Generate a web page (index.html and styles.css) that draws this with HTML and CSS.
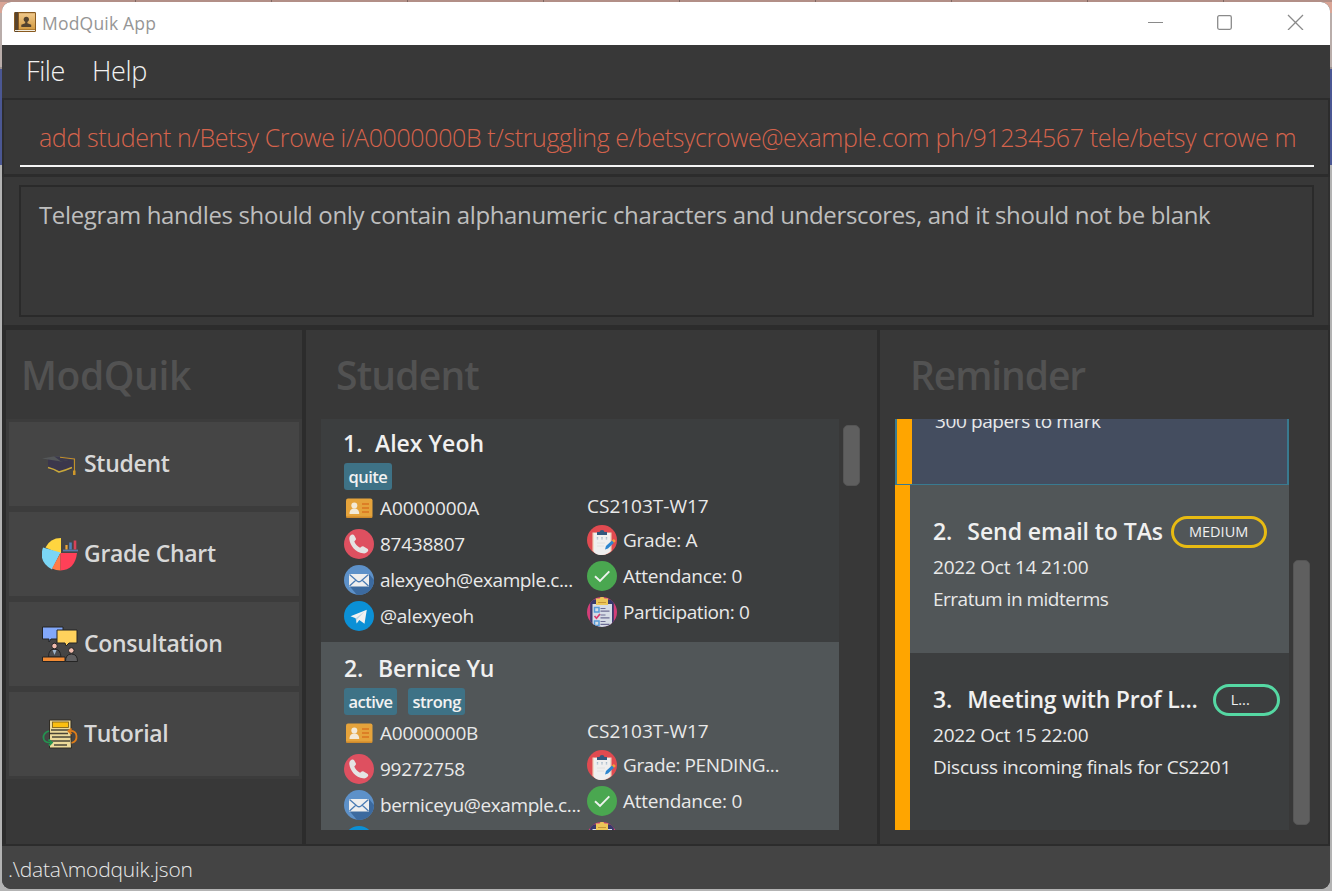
FILE: index.html
```html
<!DOCTYPE html>
<html lang="en">
<head>
<meta charset="utf-8">
<title>ModQuik App</title>
<link rel="stylesheet" href="styles.css">
</head>
<body>
<svg width="0" height="0" class="defs">
  <symbol id="i-id" viewBox="0 0 30 30">
    <rect x="2" y="5.500" width="26.500" height="19.500" rx="2" fill="#e5a33b"/>
    <path d="M2 23.500h26.500v0a1.500 1.500 0 0 1-1.500 1.500H3.500A1.500 1.500 0 0 1 2 23.500z" fill="#cf8a2c"/>
    <circle cx="10.300" cy="12.500" r="3" fill="#f3ead8"/>
    <path d="M5.500 21c0-4 2-5.500 4.800-5.500s4.900 1.500 4.900 5.500z" fill="#f3ead8"/>
    <path d="M18 11h7M18 15h7M18 19h7" stroke="#dc7f26" stroke-width="2"/>
  </symbol>
  <symbol id="i-phone" viewBox="0 0 30 30">
    <circle cx="15" cy="15" r="15" fill="#de5060"/>
    <path d="M7.500 5.800c1-.6 2.300-.2 2.800.8l1.500 2.700c.4.900.1 1.700-.6 2.300l-.9.900c.8 2.500 3 4.900 5.800 6.200l1.200-1c.7-.6 1.500-.7 2.300-.2l3.800 2.200c.9.600 1.100 1.700.5 2.600-1 1.500-2.900 2.400-5 2C11.800 23.400 6 17 5.300 10c-.1-1.800.5-3.300 2.200-4.200z" fill="#e4e4e4"/>
  </symbol>
  <symbol id="i-mail" viewBox="0 0 30 30">
    <circle cx="15" cy="15" r="15" fill="#5d91c9"/>
    <path d="M5 20.500L13 29.900Q18 30.500 23 27.700Q30 23 30 15L25 9z" fill="#3c6a9f"/>
    <rect x="5" y="9" width="20" height="12.500" fill="#eeeeee"/>
    <path d="M5.500 9.500L13 16q2 1.500 4 0l7.500-6.500M5.500 21l6.500-6M24.500 21L18 15" fill="none" stroke="#4b7cb4" stroke-width="1.300"/>
  </symbol>
  <symbol id="i-telegram" viewBox="0 0 30 30">
    <circle cx="15" cy="15" r="15" fill="#0b90d6"/>
    <path d="M6.500 15.300L22.800 8.800 20.500 22.700 15.300 19 12.700 22.500 11.700 17.200z" fill="#f1f1f1"/>
    <path d="M11.700 17.200L20.500 10.500 13.300 18.300 12.700 22.500z" fill="#bdd5e4"/>
  </symbol>
  <symbol id="i-grade" viewBox="0 0 30 30">
    <circle cx="15" cy="15" r="15" fill="#e04a50"/>
    <path d="M5.500 7.500h19v18.400Q20 30 15 30T5.500 26z" fill="#efd9c5"/>
    <path d="M7 8h16v18.500Q19 30 14 30T7 27z" fill="#efefef"/>
    <path d="M10 10V7h2.500q.3-2 2.500-2t2.500 2H20v3z" fill="#31577d"/>
    <path d="M10.500 12v3M15 12v3M19.500 12v3" stroke="#a9bccb" stroke-width="1.400" stroke-dasharray="1.800 .6"/>
    <path d="M10 18h8M10 21h7" stroke="#dddddd" stroke-width=".8"/>
    <path d="M18 24.500l1-3.500 6-5.500 2 2.200-6 5.700z" fill="#2c86cf"/>
    <path d="M25 15.500l1.800-1.600 2 2.200L27 17.700z" fill="#eea33c"/>
  </symbol>
  <symbol id="i-check" viewBox="0 0 30 30">
    <circle cx="15" cy="15" r="15" fill="#4aa750"/>
    <path d="M8 15.200l5 4.800 9.300-9.600" fill="none" stroke="#eef2ee" stroke-width="1.900"/>
  </symbol>
  <symbol id="i-part" viewBox="0 0 30 30">
    <clipPath id="pc"><circle cx="15" cy="15" r="15"/></clipPath>
    <g clip-path="url(#pc)">
      <rect width="30" height="30" fill="#d33e78"/>
      <rect x="3.200" y="2.500" width="23.600" height="29" rx="2" fill="#393a6c"/>
      <rect x="5.500" y="7" width="19.500" height="23" fill="#d6dce6"/>
      <path d="M9 1.500h3.500L13.500 0h3l1 1.500H21V8H9z" fill="#ecc657"/>
      <path d="M11 5.500h8" stroke="#c69537" stroke-width="1"/>
      <rect x="7.500" y="10.500" width="4.500" height="4.500" fill="none" stroke="#579bd8" stroke-width="1.500"/>
      <path d="M7.500 19l2 2.300 3.500-4.300" fill="none" stroke="#da3b70" stroke-width="1.700"/>
      <rect x="7.500" y="24" width="4.500" height="4.500" fill="none" stroke="#579bd8" stroke-width="1.500"/>
      <path d="M13.500 11.500h5M13.500 14.200h9M13.500 18h5M13.500 20.800h9M13.500 24.500h5M13.500 27.300h9" stroke="#6c6c94" stroke-width="1.200"/>
    </g>
  </symbol>
</svg>
<div class="window">
  <header class="titlebar">
    <svg class="app-icon" viewBox="0 0 22 20">
      <defs><linearGradient id="book" x2="0" y2="1"><stop offset="0" stop-color="#f0c88a"/><stop offset="1" stop-color="#d39b42"/></linearGradient></defs>
      <rect width="22" height="20" rx="1.200" fill="#8a5b20"/>
      <path d="M1 0h3v20H1z" fill="#59442c"/>
      <rect x="5" y="1.200" width="16" height="16.300" fill="url(#book)"/>
      <path d="M1 18.500h20" stroke="#f2eee2"/>
      <circle cx="12.300" cy="7.300" r="2.600" fill="#54432f"/>
      <path d="M11.200 9h2.200v2.200l3.800 1.500V15H7.300v-2.300l3.900-1.500z" fill="#54432f"/>
    </svg>
    <span class="app-title">ModQuik App</span>
    <svg class="controls" viewBox="0 0 156 16">
      <g fill="none" stroke="#8a8a8a" stroke-width="1.300">
        <path d="M0 8.500h15" stroke-width="1"/><rect x="69.700" y="1.700" width="13.600" height="13.600" rx="1.500"/><path d="M140 1l15 15M155 1l-15 15"/>
      </g>
    </svg>
  </header>
  <nav class="menu"><span>File</span><span>Help</span></nav>
  <section class="command"><div class="command-input">add student n/Betsy Crowe i/A0000000B t/struggling e/betsycrowe@example.com ph/91234567 tele/betsy crowe m</div></section>
  <section class="result"><div class="result-box">Telegram handles should only contain alphanumeric characters and underscores, and it should not be blank</div></section>
  <main class="panels">
    <aside class="panel side">
      <h1>ModQuik</h1>
      <div class="tabs">
        <div class="tab">
          <svg viewBox="0 0 36 36"><path d="M6 12l12 3.500 13-3v10.500Q18 28 6 23z" fill="#3b374c"/><path d="M0 12.500L14 10 36 12 19 15.500z" fill="#545759"/><path d="M12 10.300L36 12l-17 3.500z" fill="#3b394c"/><path d="M6 21.500q6 1.500 11 4.500 6-1.500 13-4.500" fill="none" stroke="#c8a83a" stroke-width="1.600"/><path d="M18 11.300l14.500 1.700V28" fill="none" stroke="#c2902b" stroke-width="1.100"/><path d="M31 24.500h2.500V29H31z" fill="#cf982b"/></svg>
          <span>Student</span></div>
        <div class="tab">
          <svg viewBox="0 0 36 36"><path d="M18 18L3.500 11.500Q8 2 19 2v15z" fill="#ffd53f"/><path d="M18.500 16.500L1 11.500Q-4 26 10 33.500z" fill="#7bd6f5"/><path d="M18.500 17L10 32.500q4 2 8.500 2z" fill="#ff7b47"/><path d="M18.500 17H35Q33 34 18.500 34.500z" fill="#ff4058"/><path d="M21 14.500h15" stroke="#5879a8" stroke-width="1.800"/><path d="M24.500 9v4.500" stroke="#eca438" stroke-width="2.200"/><path d="M28.500 6.500v7" stroke="#4f82bd" stroke-width="2.600"/><path d="M33 4.500v9" stroke="#d84258" stroke-width="2.600"/></svg>
          <span>Grade Chart</span></div>
        <div class="tab">
          <svg viewBox="0 0 36 36"><g stroke="#242424" stroke-width="1"><path d="M.5 1h20.500v12H9l-2 3v-3H.5z" fill="#82a8fa"/><path d="M15 4h20v13H27l-3 3-1-3h-8z" fill="#ffd25c"/><path d="M6.500 31q0-8 6-8t6.500 8z" fill="#4b4c4f"/><circle cx="12.500" cy="20" r="2.800" fill="#f0bcae"/><path d="M23.500 35.500q0-7.500 6-7.500t6 7.500z" fill="#5f5f61"/><circle cx="29.300" cy="24.500" r="2.800" fill="#f0bcae"/><path d="M.5 31h22.500v4.500H.5z" fill="#f28b34"/></g><path d="M10.500 24l2 5 2-5" fill="#9fb6cd"/></svg>
          <span>Consultation</span></div>
        <div class="tab">
          <svg viewBox="0 0 36 36"><path d="M7.500 4h21.500v19l.5 9H7.500z" fill="#ebd99a" stroke="#302c24"/><rect x="10.500" y="6" width="16" height="5.500" fill="#fbbf10" stroke="#735715" stroke-width=".8"/><path d="M9 14h19M8 17.500h18M10 21h19M8 25h20M12 29h13" stroke="#4a4537" stroke-width="1.300"/><g fill="none" stroke-width="1.800"><path d="M7 15Q1 17 1.500 22T9 26.500" stroke="#249250"/><path d="M6.500 23.500l3.500 3-3 3" stroke="#249250"/><path d="M27 15q7-.5 7.500 5t-5 7" stroke="#df7d19"/><path d="M29.500 12.500L26.500 15l3 3" stroke="#df7d19"/></g></svg>
          <span>Tutorial</span></div>
      </div>
    </aside>
    <section class="panel students">
      <h1>Student</h1>
      <div class="scroller">
        <div class="list">
          <article class="student first">
            <h2><span class="num">1.</span><span>Alex Yeoh</span></h2>
            <div class="tags"><span>quite</span></div>
            <div class="cols">
              <ul><li class="wide"><svg><use href="#i-id"/></svg>A0000000A</li><li><svg><use href="#i-phone"/></svg>87438807</li><li class="tight"><svg><use href="#i-mail"/></svg>alexyeoh@example.c...</li><li><svg><use href="#i-telegram"/></svg>@alexyeoh</li></ul>
              <ul><li class="group">CS2103T-W17</li><li><svg><use href="#i-grade"/></svg>Grade: A</li><li><svg><use href="#i-check"/></svg>Attendance: 0</li><li class="tight"><svg><use href="#i-part"/></svg>Participation: 0</li></ul>
            </div>
          </article>
          <article class="student alt">
            <h2><span class="num">2.</span><span>Bernice Yu</span></h2>
            <div class="tags"><span>active</span><span>strong</span></div>
            <div class="cols">
              <ul><li><svg><use href="#i-id"/></svg>A0000000B</li><li><svg><use href="#i-phone"/></svg>99272758</li><li class="tight"><svg><use href="#i-mail"/></svg>berniceyu@example.c...</li><li><svg><use href="#i-telegram"/></svg></li></ul>
              <ul><li class="group">CS2103T-W17</li><li class="tight"><svg><use href="#i-grade"/></svg>Grade: PENDING...</li><li><svg><use href="#i-check"/></svg>Attendance: 0</li><li class="tight"><svg><use href="#i-part"/></svg>Participation: 0</li></ul>
            </div>
          </article>
        </div>
        <div class="track"><div class="thumb"></div></div>
      </div>
    </section>
    <section class="panel reminders">
      <h1>Reminder</h1>
      <div class="scroller">
        <div class="list">
          <article class="reminder selected"><p>300 papers to mark</p></article>
          <article class="reminder alt">
            <h2><span class="num">2.</span><span>Send email to TAs</span><span class="pill medium">MEDIUM</span></h2>
            <p class="date">2022 Oct 14 21:00</p><p class="snug">Erratum in midterms</p>
          </article>
          <article class="reminder last">
            <h2><span class="num">3.</span><span class="long">Meeting with Prof L...</span><span class="pill low">L...</span></h2>
            <p class="date">2022 Oct 15 22:00</p><p>Discuss incoming finals for CS2201</p>
          </article>
        </div>
        <div class="track"><div class="thumb"></div></div>
      </div>
    </section>
  </main>
  <footer class="status">.\data\modquik.json</footer>
</div>
</body>
</html>
```
FILE: styles.css
```css
* { box-sizing: border-box; margin: 0; padding: 0; }
body {
  width: 1332px; height: 891px; padding: 2px; overflow: hidden;
  font-family: "Open Sans", "Noto Sans", sans-serif; font-size: 19px; color: #e9e9e9;
  background:
    repeating-linear-gradient(90deg, transparent 0 135px, #7d6762 135px 136px) 0 0 / 1332px 2px no-repeat,
    linear-gradient(#b28f87 0 2px, #d9a596 2px 13px, #b9adaa 13px 67px, #99908e 67px 69px, #4b5793 69px 165px, #b3b3b3 165px 100%);
}
.defs { position: absolute; }
.window {
  width: 1328px; height: 887px; border-radius: 9px; overflow: hidden;
  display: flex; flex-direction: column; background: #383838;
}
.titlebar { height: 43px; background: #fff; display: flex; align-items: center; padding: 0 26px 0 12px; }
.app-icon { width: 22px; height: 20px; margin-top: -3px; }
.app-title { margin: -1px 0 0 6px; font-size: 17.500px; letter-spacing: .2px; color: #969696; }
.controls { width: 156px; height: 16px; margin: -3px 0 0 auto; }
.menu { height: 53px; display: flex; gap: 27px; padding-left: 24px; font-size: 27px; font-weight: 300; line-height: 51px; letter-spacing: -.4px; color: #f2f2f2; }
.command { height: 79px; border: 2px solid #2c2c2c; border-bottom-width: 3px; padding: 0 14px 0 16px; }
.command-input {
  height: 67px; border-bottom: 2px solid #f4f4f4; padding-left: 19px; padding-top: 10px;
  font-size: 25px; font-weight: 300; line-height: 55px; letter-spacing: -.375px; white-space: nowrap; color: #d5634c;
}
.result { height: 148px; border-left: 2px solid #303030; border-right: 2px solid #303030; padding: 8px 14px 8px 15px; }
.result-box {
  height: 132px; border: 2px solid #2a2a2a; padding: 10px 18px; font-size: 24px; line-height: 36px;
  letter-spacing: -.355px; white-space: nowrap; color: #bebebe;
}
.panels {
  height: 520px; display: grid; grid-template-columns: 296px 571px 447px; column-gap: 4px;
  padding: 5px 3px 1px 4px; background: #2c2c2c;
}
.panel { background: #383838; display: flex; flex-direction: column; min-width: 0; overflow: hidden; }
h1 { height: 89px; font-size: 39px; font-weight: 600; line-height: 89px; letter-spacing: -.4px; color: #525252; }
.side h1 { padding-left: 15px; }
.students h1 { padding-left: 30px; letter-spacing: -.8px; }
.reminders { margin-left: -1px; }
.reminders h1 { padding-left: 30px; letter-spacing: -1.100px; }
.tabs { background: #3c3c3c; padding: 3px 3px; display: flex; flex-direction: column; gap: 6px; }
.tab { height: 84px; background: #454545; display: flex; align-items: center; gap: 6px; padding-left: 33px; font-size: 23px; font-weight: 600; letter-spacing: -.3px; color: #d8d8d8; }
.tab svg { width: 36px; height: 36px; }
.tab span { margin-top: -2px; }
.scroller { display: flex; height: 411px; padding-left: 15px; }
.list { width: 518px; height: 411px; overflow: hidden; }
.student { height: 225px; padding: 12px 0 0 23px; background: #3c3e3f; }
.student.first { margin-top: -2px; }
.alt { background: #515658; }
h2 { display: flex; font-size: 23px; font-weight: 600; line-height: 28px; white-space: nowrap; color: #f0f0f0; }
.num { margin-right: 15px; }
.student h2 { letter-spacing: -.2px; }
.student .num { width: 19px; }
.student.first .num { margin: 0 13px 0 -1px; }
.student.first h2 { letter-spacing: 0; }
.tags { display: flex; gap: 11px; margin-top: 6px; height: 27px; }
.tags span { background: #3e7286; border-radius: 3px; padding: 0 4.500px; font-size: 16.500px; font-weight: 600; line-height: 27px; letter-spacing: -.52px; color: #f2f2f2; }
.cols { display: grid; grid-template-columns: 243px 1fr; }
ul { list-style: none; }
li { height: 36px; display: flex; align-items: center; gap: 6px; line-height: 28px; white-space: nowrap; letter-spacing: -.25px; }
li svg { width: 30px; height: 30px; flex: none; }
.tight { letter-spacing: -.4px; }
.wide { letter-spacing: -.1px; }
.group { height: 32px; letter-spacing: 0; }
.track { width: 17px; margin-left: 4px; padding-top: 6px; }
.thumb { height: 61px; border-radius: 5px; background: #5f5f5f; border: 1px solid #555; }
.reminders .list { width: 394px; }
.reminders .thumb { height: 265px; margin-top: 135px; }
.reminder { height: 168px; border-left: 15px solid #ffa500; padding: 31px 0 0 23px; background: #3c3e3f; }
.reminder.last { height: 177px; }
.reminder.alt { background: #515658; }
.reminder.selected {
  height: 66px; overflow: hidden; padding: 0 0 0 38px; border: solid #397a90; border-width: 0 2px 1px 2px;
  background: linear-gradient(90deg, #ffa500 15px, #444d5f 15px);
}
.reminder h2 { height: 32px; line-height: 30px; margin-bottom: 3px; letter-spacing: -.06px; }
.reminder .long { letter-spacing: -.22px; }
.reminder p { line-height: 32px; height: 32px; letter-spacing: -.24px; white-space: nowrap; }
.reminder p.date { letter-spacing: -.22px; }
.reminder .snug { letter-spacing: -.5px; }
.reminder.selected p { margin-top: -14px; letter-spacing: -.4px; }
.pill { height: 32px; border: 3px solid #e8bb12; border-radius: 16px; padding: 0 15px; font-size: 14.500px; font-weight: 400; line-height: 25px; letter-spacing: 0; }
.medium { margin-left: 8px; width: 96px; }
.low { margin-left: 15px; width: 67px; border-color: #55d8a3; }
.status { height: 44px; background: #444; border-top: 1px solid #2c2c2c; padding-left: 6px; font-size: 21px; font-weight: 300; line-height: 47px; letter-spacing: -.2px; }
```
